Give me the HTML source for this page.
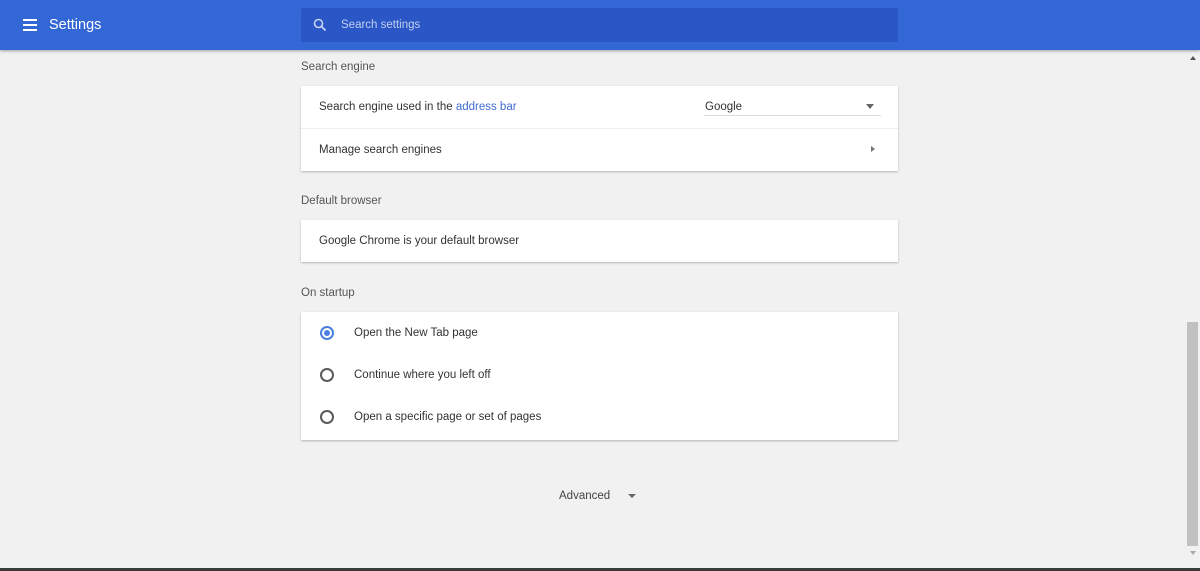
<!DOCTYPE html>
<html><head><meta charset="utf-8"><style>
*{margin:0;padding:0;box-sizing:border-box}
body{width:1200px;height:571px;background:#f1f1f1;font-family:"Liberation Sans",Arial,sans-serif;font-size:12px;color:#333;position:relative;overflow:hidden}
.hdr{position:absolute;left:0;top:0;width:1200px;height:50px;background:#3367d6;box-shadow:0 1px 3px rgba(0,0,0,.35)}
.a{position:absolute}
.card{position:absolute;left:301px;width:597px;background:#fff;box-shadow:0 1px 2px rgba(0,0,0,.25)}
.h{position:absolute;left:301px;font-size:11.5px;color:#555}
.row{position:absolute;left:18px;font-size:11.5px;color:#333}
.radio{position:absolute;left:19px;width:14px;height:14px;border:2px solid #5a5a5a;border-radius:50%}
</style></head><body>
<div class="hdr">
 <div class="a" style="left:23px;top:19px;width:14px;height:2px;background:#fff"></div>
 <div class="a" style="left:23px;top:24px;width:14px;height:2px;background:#fff"></div>
 <div class="a" style="left:23px;top:29px;width:14px;height:2px;background:#fff"></div>
 <div class="a" style="left:49px;top:17px;color:#fff;font-size:14.5px">Settings</div>
 <div class="a" style="left:301px;top:8px;width:597px;height:34px;background:#2a56c6;border-radius:2px">
  <svg class="a" style="left:12px;top:10px" width="14" height="14" viewBox="0 0 14 14"><circle cx="5.5" cy="5.5" r="4" fill="none" stroke="#c7d3f2" stroke-width="1.6"/><path d="M8.5 8.5L12.5 12.5" stroke="#c7d3f2" stroke-width="1.8"/></svg>
  <div class="a" style="left:40px;top:11px;color:#c2cff0;font-size:11.5px">Search settings</div>
 </div>
</div>
<div class="h" style="top:61px">Search engine</div>
<div class="card" style="top:86px;height:85px">
 <div class="row" style="top:15px">Search engine used in the <span style="color:#3f6bd1">address bar</span></div>
 <div class="a" style="left:404px;top:15px;font-size:11.5px">Google</div>
 <div class="a" style="left:403px;top:29px;width:177px;height:1px;background:#ddd"></div>
 <div class="a" style="left:565px;top:18px;width:0;height:0;border-left:4.5px solid transparent;border-right:4.5px solid transparent;border-top:5px solid #666"></div>
 <div class="a" style="left:0;top:42px;width:597px;height:1px;background:#eee"></div>
 <div class="row" style="top:58px">Manage search engines</div>
 <div class="a" style="left:570px;top:60px;width:0;height:0;border-top:3.5px solid transparent;border-bottom:3.5px solid transparent;border-left:4px solid #777"></div>
</div>
<div class="h" style="top:195px">Default browser</div>
<div class="card" style="top:220px;height:42px">
 <div class="row" style="top:15px">Google Chrome is your default browser</div>
</div>
<div class="h" style="top:287px">On startup</div>
<div class="card" style="top:312px;height:128px">
 <div class="radio" style="top:14px;border-color:#4a7fe0"><div class="a" style="left:2px;top:2px;width:6px;height:6px;border-radius:50%;background:#4a7fe0"></div></div>
 <div class="row" style="left:53px;top:15px">Open the New Tab page</div>
 <div class="radio" style="top:56px"></div>
 <div class="row" style="left:53px;top:57px">Continue where you left off</div>
 <div class="radio" style="top:98px"></div>
 <div class="row" style="left:53px;top:99px">Open a specific page or set of pages</div>
</div>
<div class="a" style="left:559px;top:490px;font-size:11.5px;color:#444">Advanced</div>
<div class="a" style="left:628px;top:494px;width:0;height:0;border-left:4px solid transparent;border-right:4px solid transparent;border-top:4px solid #666"></div>
<div class="a" style="left:1190px;top:56px;width:0;height:0;border-left:3.5px solid transparent;border-right:3.5px solid transparent;border-bottom:4px solid #555"></div>
<div class="a" style="left:1187px;top:322px;width:11px;height:224px;background:#c1c1c1"></div>
<div class="a" style="left:1190px;top:551px;width:0;height:0;border-left:3.5px solid transparent;border-right:3.5px solid transparent;border-top:4px solid #aaa"></div>
<div class="a" style="left:0;top:568px;width:1200px;height:3px;background:#3a3a3a"></div>
</body></html>
